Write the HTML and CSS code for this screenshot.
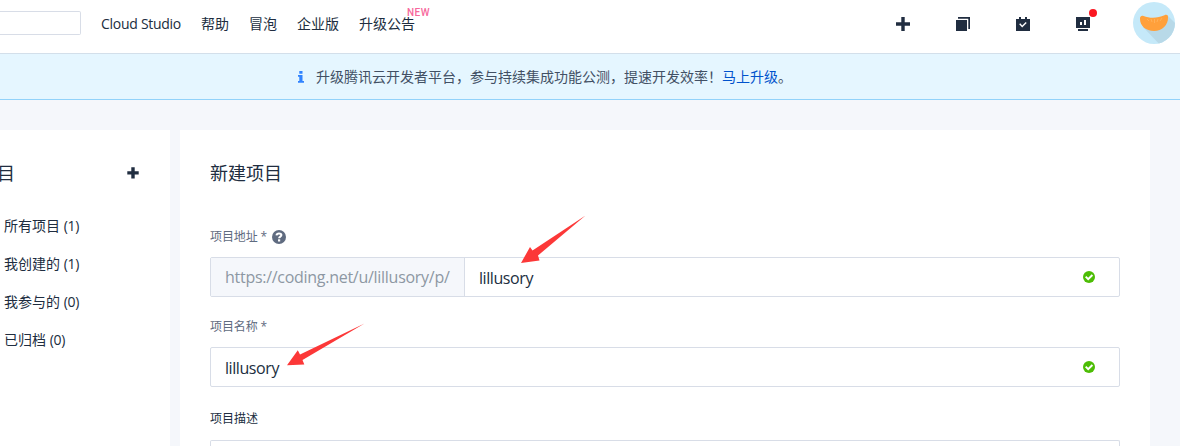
FILE: index.html
```html
<!DOCTYPE html>
<html lang="zh-CN">
<head>
<meta charset="utf-8">
<title>新建项目</title>
<link rel="stylesheet" href="styles.css">
</head>
<body>
<header class="topbar">
  <div class="search"></div>
  <nav class="nav">
    <a class="nav-latin">Cloud Studio</a>
    <a>帮助</a>
    <a>冒泡</a>
    <a>企业版</a>
    <a class="nav-new">升级公告<span class="new">NEW</span></a>
  </nav>
  <div class="tools">
    <svg width="14" height="14" viewBox="0 0 14 14"><path fill="#202d40" d="M5.300 0h3.400v5.300H14v3.400H8.700V14H5.300V8.700H0V5.300h5.300z"/></svg>
    <svg width="14" height="14" viewBox="0 0 14 14"><path fill="#202d40" d="M0 3h11v11H0zM2 0h12v12h-1.700V1.700H2z"/></svg>
    <svg width="14" height="14" viewBox="0 0 14 14"><path fill="#202d40" d="M0 2h3V0h2v2h4V0h2v2h3v12H0z"/><path d="M3.700 6.800l2.500 2.700 4-4" fill="none" stroke="#fff" stroke-width="1.400"/></svg>
    <span class="monitor">
      <svg width="14" height="14" viewBox="0 0 14 14"><path fill="#202d40" d="M0 0h14v11H0zM2 12h10v2H2z"/><path fill="#fff" d="M4 5h2v3H4zM8 3h2v5H8z"/></svg>
      <i class="dot"></i>
    </span>
  </div>
  <svg class="avatar" width="42" height="42" viewBox="0 0 42 42">
    <defs><clipPath id="disc"><circle cx="21" cy="21" r="21"/></clipPath></defs>
    <g clip-path="url(#disc)">
      <path fill="#c5e9f9" d="M0 0h42v42H0z"/>
      <path fill="#b8d9e8" d="M34 13l12 12v21H30L10 25z"/>
      <path fill="#ffa03b" d="M7 17c-.4-2 1.500-4 3.500-3 6.500 2.700 14.500 2.300 21-.7 2-1 3.500-.3 3.500 1.700C35.500 23 29 29 21 29S7 24 7 17z"/>
      <path d="M14 17l2 2M18 17l1 3M21.500 17v4M25 17l-1 3M29 16l-2 3" stroke="#ffb765" stroke-width=".7" fill="none"/>
    </g>
  </svg>
</header>
<div class="banner">
  <svg width="6" height="12" viewBox="0 0 6 12"><path fill="#3083ff" d="M1.300 0h3.200v2.700H1.300zM0 4h4.500v6H6v1.800H0V10h1.300V5.800H0z"/></svg>
  <p>升级腾讯云开发者平台，参与持续集成功能公测，提速开发效率！<a>马上升级</a>。</p>
</div>
<main class="page">
  <aside class="sidebar">
    <div class="side-head">
      <h2>项目</h2>
      <svg width="12" height="12" viewBox="0 0 12 12"><path fill="#202d40" d="M4.300.3h3.400v4h4v3.200h-4v4H4.300v-4h-4V4.300h4z"/></svg>
    </div>
    <ul class="filters">
      <li>所有项目 <span>(1)</span></li>
      <li>我创建的 <span>(1)</span></li>
      <li>我参与的 <span>(0)</span></li>
      <li>已归档 <span>(0)</span></li>
    </ul>
  </aside>
  <section class="panel">
    <h1>新建项目</h1>
    <div class="label">项目地址 *
      <svg width="14" height="14" viewBox="0 0 14 14"><circle cx="7" cy="7" r="7" fill="#5f6b80"/><path d="M4.500 5.300C4.700 3.900 5.800 3.400 7 3.400c1.500 0 2.400.7 2.400 1.700 0 1.500-2.300 1.500-2.300 3.100" fill="none" stroke="#fff" stroke-width="2"/><path fill="#fff" d="M6 9.300h2.200v2.200H6z"/></svg>
    </div>
    <div class="field address">
      <span class="prefix">https://coding.net/u/lillusory/p/</span>
      <span class="value">lillusory</span>
      <svg class="ok" width="12" height="12" viewBox="0 0 12 12"><circle cx="6" cy="6" r="6" fill="#4dbd05"/><path d="M2.700 5.600l2.500 2.500L9.400 4" fill="none" stroke="#fff" stroke-width="2"/></svg>
      <svg class="arrow arrow-address" width="66" height="49" viewBox="0 0 66 49"><path fill="#fc3838" d="M65.500.5L18 40.500l1.500 5L1 48l9-16 2.500 3.500z"/></svg>
    </div>
    <div class="label">项目名称 *</div>
    <div class="field">
      <span class="value">lillusory</span>
      <svg class="ok" width="12" height="12" viewBox="0 0 12 12"><circle cx="6" cy="6" r="6" fill="#4dbd05"/><path d="M2.700 5.600l2.500 2.500L9.400 4" fill="none" stroke="#fff" stroke-width="2"/></svg>
      <svg class="arrow arrow-name" width="79" height="43" viewBox="0 0 79 43"><path fill="#fc3838" d="M78.500.5L16.500 37l1.800 4.500L1 42.300l10.800-15 2.200 4.200z"/></svg>
    </div>
    <div class="label dark">项目描述</div>
    <div class="field textarea"></div>
  </section>
</main>
</body>
</html>
```
FILE: styles.css
```css
* { box-sizing: border-box; }
body {
  margin: 0;
  height: 446px;
  overflow: hidden;
  display: flex;
  flex-direction: column;
  background: #f5f7fb;
  color: #202d40;
  font: 14px/20px "Open Sans", "Noto Sans CJK SC", sans-serif;
}
svg { display: block; flex: none; }
h1, h2, p, ul { margin: 0; padding: 0; font-weight: 400; }
.topbar {
  flex: none;
  height: 54px;
  display: flex;
  background: #fff;
  border-bottom: 1px solid #d3dfea;
}
.search {
  width: 81px;
  height: 24px;
  margin-top: 11px;
  border: 1px solid #d8dde7;
  border-left: 0;
  border-radius: 0 2px 2px 0;
}
.nav { display: flex; gap: 20px; margin: 14px 0 0 20px; white-space: nowrap; }
.nav-latin { width: 80px; letter-spacing: -.28px; }
.nav-new { position: relative; }
.new {
  position: absolute;
  left: 48px;
  top: -7px;
  font: 500 10px/12px Roboto, sans-serif;
  letter-spacing: .5px;
  color: #f7689c;
}
.tools { display: flex; gap: 46px; margin: 17px 0 0 auto; }
.monitor { position: relative; }
.dot {
  position: absolute;
  left: 13px;
  top: -8px;
  width: 8px;
  height: 8px;
  border-radius: 50%;
  background: #fa1721;
}
.avatar { margin: 2px 5px 0 43px; }
.banner {
  flex: none;
  height: 46px;
  display: flex;
  align-items: center;
  gap: 12px;
  padding-left: 298px;
  background: #e5f6ff;
  border-bottom: 1px solid #91d2fa;
  color: #425064;
}
.banner a { color: #0052cc; }
.page { display: flex; gap: 10px; padding: 30px 30px 0 0; flex: 1; min-height: 0; }
.sidebar { width: 170px; background: #fff; }
.side-head {
  display: flex;
  align-items: center;
  justify-content: space-between;
  margin: 30px 31px 0 -21px;
  height: 26px;
}
.side-head h2, .panel h1 { font-size: 18px; line-height: 26px; }
.filters { list-style: none; margin: 30px 0 0 4px; display: grid; gap: 18px; }
.filters span { letter-spacing: -.3px; }
.panel {
  width: 970px;
  padding: 30px 30px 0;
  display: flex;
  flex-direction: column;
  background: #fff;
}
.label {
  flex: none;
  height: 20px;
  display: flex;
  align-items: center;
  gap: 5px;
  margin: 20px 0 10px;
  font-size: 12px;
  letter-spacing: -.1px;
  color: #5f6b80;
}
h1 + .label { margin-top: 41px; }
.label.dark { color: #202d40; margin: 22px 0 11px; letter-spacing: 0; }
.field {
  position: relative;
  flex: none;
  height: 40px;
  display: flex;
  align-items: center;
  border: 1px solid #d8dde7;
  border-radius: 2px;
  font-size: 16px;
}
.prefix {
  align-self: stretch;
  width: 254px;
  padding-left: 14px;
  line-height: 39px;
  letter-spacing: -.28px;
  background: #f5f7fb;
  border-right: 1px solid #d8dde7;
  color: #8d97a3;
  white-space: nowrap;
}
.value { padding: 2px 0 0 14px; letter-spacing: -.42px; }
.ok { margin: 0 24px 0 auto; }
.arrow { position: absolute; }
.arrow-address { left: 309px; top: -43px; }
.arrow-name { left: 75px; top: -25px; }
.textarea { flex: 1; height: auto; min-height: 0; border-bottom: 0; border-radius: 2px 2px 0 0; }
```
